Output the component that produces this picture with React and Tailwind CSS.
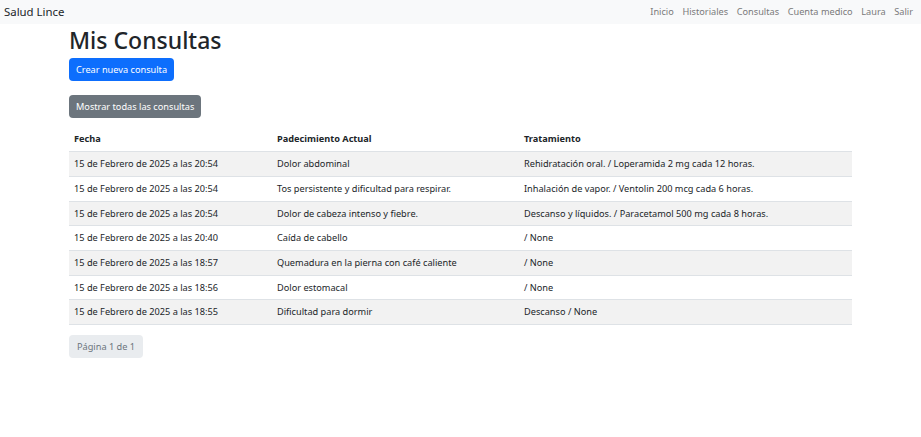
import { useState } from "react";

const consultas = [
  { fecha: "15 de Febrero de 2025 a las 20:54", padecimiento: "Dolor abdominal", tratamiento: "Rehidratación oral. / Loperamida 2 mg cada 12 horas." },
  { fecha: "15 de Febrero de 2025 a las 20:54", padecimiento: "Tos persistente y dificultad para respirar.", tratamiento: "Inhalación de vapor. / Ventolin 200 mcg cada 6 horas." },
  { fecha: "15 de Febrero de 2025 a las 20:54", padecimiento: "Dolor de cabeza intenso y fiebre.", tratamiento: "Descanso y líquidos. / Paracetamol 500 mg cada 8 horas." },
  { fecha: "15 de Febrero de 2025 a las 20:40", padecimiento: "Caída de cabello", tratamiento: "/ None" },
  { fecha: "15 de Febrero de 2025 a las 18:57", padecimiento: "Quemadura en la pierna con café caliente", tratamiento: "/ None" },
  { fecha: "15 de Febrero de 2025 a las 18:56", padecimiento: "Dolor estomacal", tratamiento: "/ None" },
  { fecha: "15 de Febrero de 2025 a las 18:55", padecimiento: "Dificultad para dormir", tratamiento: "Descanso / None" },
];

const links = ["Inicio", "Historiales", "Consultas", "Cuenta medico", "Laura", "Salir"];

export default function App() {
  const [rows] = useState(consultas);

  return (
    <div className="min-h-screen bg-white text-[#212529] font-['Noto_Sans','Open_Sans',sans-serif]">
      <nav className="h-6 bg-[#f8f9fa] flex items-center justify-between pl-1 pr-2">
        <span className="text-[11.4px]">Salud Lince</span>
        <div className="flex gap-[8.6px] text-[9.2px] text-[#7a7a7a]">
          {links.map((l) => (
            <span key={l}>{l}</span>
          ))}
        </div>
      </nav>

      <div className="ml-[69px] w-[783px] flex flex-col items-start">
        <h1 className="text-[23px] leading-[32px] font-medium">Mis Consultas</h1>

        <button className="mt-[2px] h-[23px] px-[7px] rounded-[4px] bg-[#0d6efd] text-white text-[9.2px]">
          Crear nueva consulta
        </button>

        <button className="mt-[14px] h-[23px] px-[7px] rounded-[4px] bg-[#6c757d] text-white text-[9.2px]">
          Mostrar todas las consultas
        </button>

        <table className="mt-[9px] w-full text-[9.2px] border-collapse">
          <thead>
            <tr className="h-[24.7px] border-b border-[#dee2e6]">
              <th className="w-[203px] text-left font-bold px-[5px]">Fecha</th>
              <th className="w-[247px] text-left font-bold px-[5px]">Padecimiento Actual</th>
              <th className="text-left font-bold px-[5px]">Tratamiento</th>
            </tr>
          </thead>
          <tbody>
            {rows.map((r, i) => (
              <tr key={i} className={"h-[24.7px] border-b border-[#dee2e6] " + (i % 2 === 0 ? "bg-[#f2f2f2]" : "bg-white")}>
                <td className="px-[5px]">{r.fecha}</td>
                <td className="px-[5px]">{r.padecimiento}</td>
                <td className="px-[5px]">{r.tratamiento}</td>
              </tr>
            ))}
          </tbody>
        </table>

        <div className="mt-[10px] flex items-center h-[23px] px-[8px] rounded-[4px] bg-[#e9ecef] text-[#6c757d] text-[9.2px]">
          Página 1 de 1
        </div>
      </div>
    </div>
  );
}
